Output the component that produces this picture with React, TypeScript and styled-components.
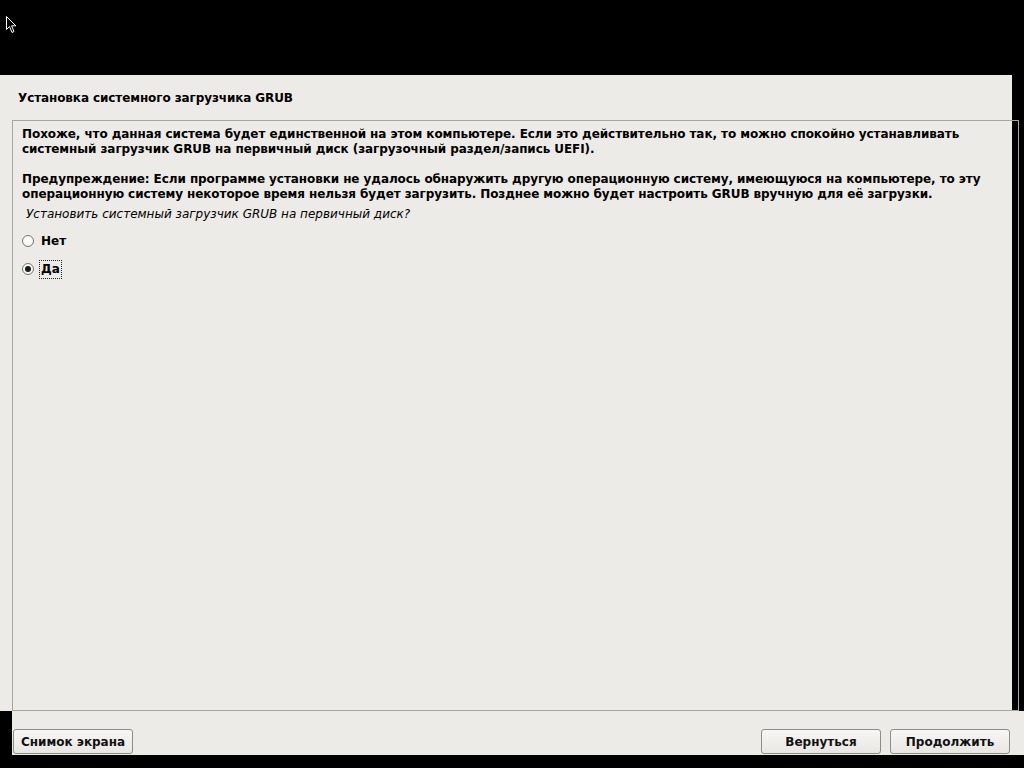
import React from "react";
import styled, { createGlobalStyle } from "styled-components";

const Global = createGlobalStyle`
  html, body { margin: 0; padding: 0; background: #000; }
  body { font-family: "DejaVu Sans", "Liberation Sans", sans-serif; }
`;

const Screen = styled.div`
  position: relative;
  width: 1024px;
  height: 768px;
  background: #000;
  display: flex;
  flex-direction: column;
  overflow: hidden;
`;

const TopBlack = styled.div`
  height: 75px;
  flex: none;
`;

const Cursor = styled.svg`
  position: absolute;
  left: 6px;
  top: 16px;
`;

const Panel = styled.div`
  width: 1012px;
  height: 636px;
  background: #edebe7;
  display: flex;
  flex-direction: column;
  flex: none;
`;

const Header = styled.div`
  height: 45px;
  display: flex;
  align-items: center;
  padding-left: 18px;
  font-weight: bold;
  font-size: 12px;
  letter-spacing: -0.1px;
  color: #000;
  flex: none;
`;

const Frame = styled.div`
  margin-left: 12px;
  width: 996px;
  flex: 1;
  border: 1px solid #a7a6a2;
  padding: 6px 0 0 9px;
  font-size: 12px;
  line-height: 15px;
  color: #000;
`;

const Para = styled.p`
  margin: 0 0 15px 0;
  font-weight: bold;
  letter-spacing: -0.08px;
  &:last-of-type { margin-bottom: 5px; }
`;

const Question = styled.div`
  font-style: italic;
  padding-left: 4px;
  margin-bottom: 5px;
`;

const Option = styled.div`
  display: flex;
  align-items: center;
  height: 28px;
  gap: 5px;
  font-weight: bold;
`;

const Radio = styled.span<{ $checked?: boolean }>`
  width: 10px;
  height: 10px;
  border-radius: 50%;
  border: 1px solid #77766f;
  background: radial-gradient(circle at 50% 35%, #ffffff, #f2f1ee);
  display: inline-flex;
  align-items: center;
  justify-content: center;
  &::after {
    content: "";
    display: ${(p) => (p.$checked ? "block" : "none")};
    width: 6px;
    height: 6px;
    border-radius: 50%;
    background: #1a1a1a;
  }
`;

const OptLabel = styled.span<{ $focus?: boolean }>`
  padding: 1px 1px;
  border: 1px dotted ${(p) => (p.$focus ? "#222" : "transparent")};
  line-height: 15px;
`;

const BottomBar = styled.div`
  margin-left: 12px;
  width: 1012px;
  height: 44px;
  background: #edebe7;
  display: flex;
  align-items: flex-end;
  padding: 0 14px 1px 1px;
  box-sizing: border-box;
  gap: 9px;
  flex: none;
`;

const Button = styled.button`
  width: 120px;
  height: 25px;
  border: 1px solid #8e8d88;
  border-radius: 3px;
  background: linear-gradient(#f7f6f4, #e9e7e3);
  font-family: "DejaVu Sans", sans-serif;
  font-weight: bold;
  font-size: 12px;
  color: #111;
  padding: 0;
  cursor: default;
`;

const Spacer = styled.div`
  flex: 1;
`;

export default function App() {
  return (
    <Screen>
      <Global />
      <TopBlack />
      <Cursor width="12" height="18" viewBox="0 0 12 18">
        <path d="M0.5 0.5 L0.5 13.5 L3.5 10.5 L6 16.5 L8 15.5 L5.6 9.8 L9.8 9.8 Z" fill="#000" stroke="#fff" strokeWidth="1" />
      </Cursor>
      <Panel>
        <Header>Установка системного загрузчика GRUB</Header>
        <Frame>
          <Para>
            Похоже, что данная система будет единственной на этом компьютере. Если это действительно так, то можно спокойно устанавливать
            <br />
            системный загрузчик GRUB на первичный диск (загрузочный раздел/запись UEFI).
          </Para>
          <Para>
            Предупреждение: Если программе установки не удалось обнаружить другую операционную систему, имеющуюся на компьютере, то эту
            <br />
            операционную систему некоторое время нельзя будет загрузить. Позднее можно будет настроить GRUB вручную для её загрузки.
          </Para>
          <Question>Установить системный загрузчик GRUB на первичный диск?</Question>
          <Option>
            <Radio />
            <OptLabel>Нет</OptLabel>
          </Option>
          <Option>
            <Radio $checked />
            <OptLabel $focus>Да</OptLabel>
          </Option>
        </Frame>
      </Panel>
      <BottomBar>
        <Button>Снимок экрана</Button>
        <Spacer />
        <Button>Вернуться</Button>
        <Button>Продолжить</Button>
      </BottomBar>
    </Screen>
  );
}
